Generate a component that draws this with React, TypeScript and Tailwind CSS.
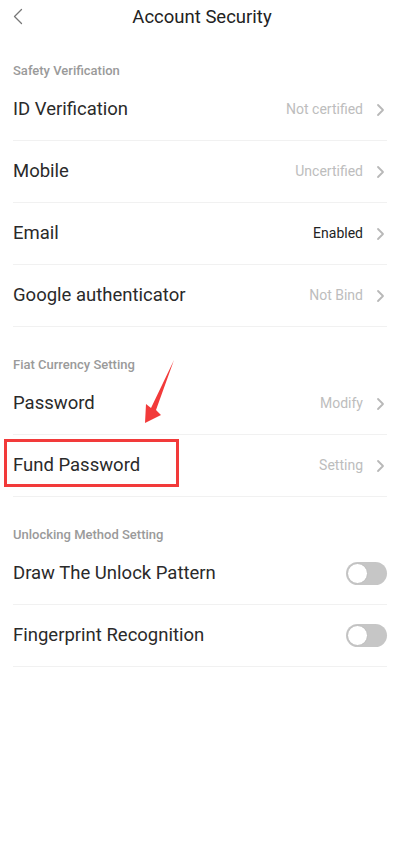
import React from 'react';

type Row = {
    label: string;
    value?: string;
    dark?: boolean;
    toggle?: boolean;
};

const sections: { title: string; rows: Row[] }[] = [
    {
        title: 'Safety Verification',
        rows: [
            { label: 'ID Verification', value: 'Not certified' },
            { label: 'Mobile', value: 'Uncertified' },
            { label: 'Email', value: 'Enabled', dark: true },
            { label: 'Google authenticator', value: 'Not Bind' },
        ],
    },
    {
        title: 'Fiat Currency Setting',
        rows: [
            { label: 'Password', value: 'Modify' },
            { label: 'Fund Password', value: 'Setting' },
        ],
    },
    {
        title: 'Unlocking Method Setting',
        rows: [
            { label: 'Draw The Unlock Pattern', toggle: true },
            { label: 'Fingerprint Recognition', toggle: true },
        ],
    },
];

const Chevron = () => (
    <svg className="w-[9px] h-[14px] text-[#b8b8b8]" viewBox="0 0 9 14" fill="none" stroke="currentColor">
        <path d="M2 2l5 5-5 5" strokeWidth={1.8} strokeLinecap="round" strokeLinejoin="round" />
    </svg>
);

const Toggle = () => (
    <div className="w-[41px] h-[23px] rounded-full bg-[#c6c6c6] flex items-center pl-[1px]">
        <div className="w-[21px] h-[21px] rounded-full bg-white border border-[#bdbdbd]" />
    </div>
);

export default function App() {
    return (
        <div className="relative w-[404px] h-[861px] bg-white text-[#333] font-['Roboto',sans-serif]">
            {/* Header */}
            <div className="h-[33px] grid grid-cols-[40px_1fr_40px] items-center">
                <div className="pl-[12px] flex items-center">
                    <svg className="w-[12px] h-[17px] text-[#777]" viewBox="0 0 12 17" fill="none" stroke="currentColor">
                        <path d="M9.5 1.5L2.5 8.5l7 7" strokeWidth={1.3} strokeLinecap="round" strokeLinejoin="round" />
                    </svg>
                </div>
                <h1 className="text-center text-[18.5px] leading-6 text-[#222]">Account Security</h1>
                <div />
            </div>

            {sections.map((section) => (
                <div key={section.title}>
                    <div className="h-[46px] flex items-end pl-[13px]">
                        <p className="text-[13px] leading-4 font-medium text-[#9a9a9a]">{section.title}</p>
                    </div>
                    <div className="ml-[13px] mr-[17px]">
                        {section.rows.map((row) => (
                            <div key={row.label} className="h-[62px] flex items-center justify-between border-b border-[#f1f1f1]">
                                <span className="text-[18.5px] pt-[1px] text-[#2a2a2a]">{row.label}</span>
                                {row.toggle ? (
                                    <Toggle />
                                ) : (
                                    <span className="flex items-center gap-[13px] pr-[2px]">
                                        <span className={`text-[14px] ${row.dark ? 'text-[#222]' : 'text-[#bdbdbd]'}`}>{row.value}</span>
                                        <Chevron />
                                    </span>
                                )}
                            </div>
                        ))}
                    </div>
                </div>
            ))}

            {/* Annotation overlay */}
            <div className="absolute left-[4px] top-[439px] w-[175px] h-[48px] border-[3px] border-[#f23a3a]" />
            <svg className="absolute left-0 top-0 w-[404px] h-[861px] pointer-events-none" viewBox="0 0 404 861">
                <polygon points="174,360 156,410 161,415 145,423 146,404 151,408" fill="#f23a3a" />
            </svg>
        </div>
    );
}
